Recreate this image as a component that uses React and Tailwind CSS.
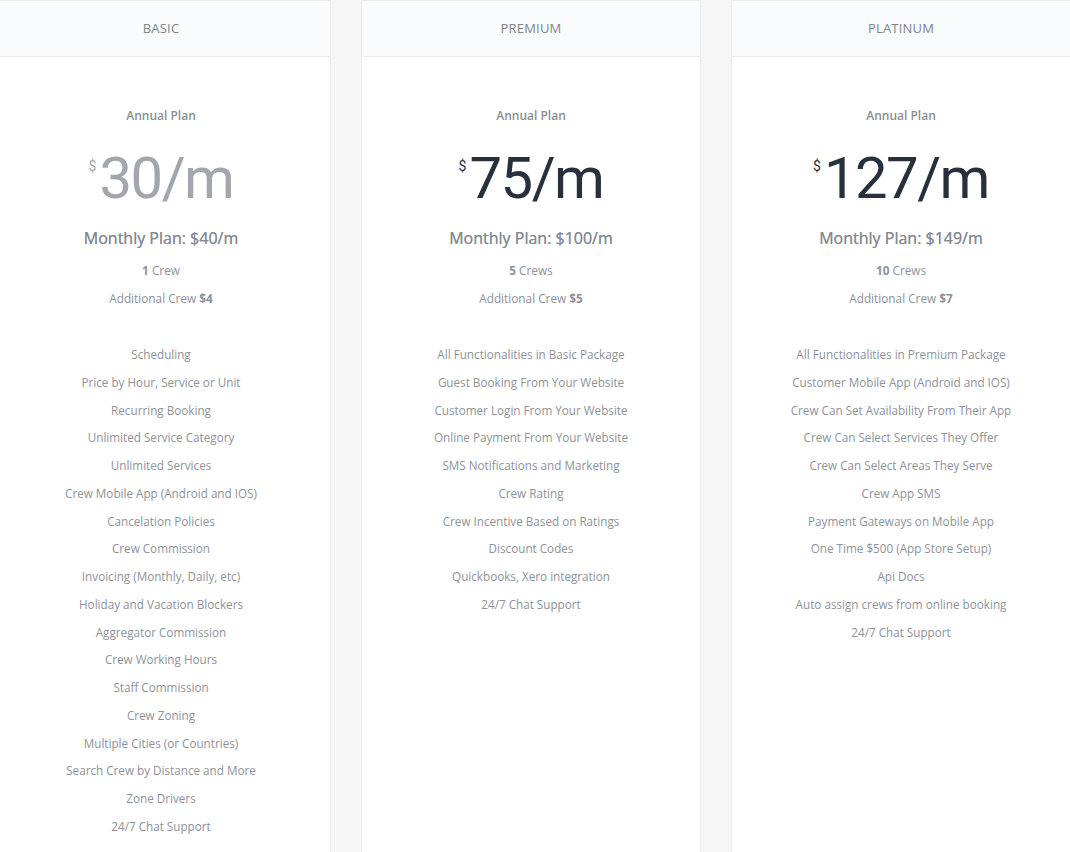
const plans = [
  {
    name: 'Basic',
    price: '30',
    muted: true,
    monthly: '$40/m',
    crews: '1',
    crewLabel: 'Crew',
    extra: '$4',
    features: [
      'Scheduling',
      'Price by Hour, Service or Unit',
      'Recurring Booking',
      'Unlimited Service Category',
      'Unlimited Services',
      'Crew Mobile App (Android and IOS)',
      'Cancelation Policies',
      'Crew Commission',
      'Invoicing (Monthly, Daily, etc)',
      'Holiday and Vacation Blockers',
      'Aggregator Commission',
      'Crew Working Hours',
      'Staff Commission',
      'Crew Zoning',
      'Multiple Cities (or Countries)',
      'Search Crew by Distance and More',
      'Zone Drivers',
      '24/7 Chat Support'
    ]
  },
  {
    name: 'Premium',
    price: '75',
    monthly: '$100/m',
    crews: '5',
    crewLabel: 'Crews',
    extra: '$5',
    features: [
      'All Functionalities in Basic Package',
      'Guest Booking From Your Website',
      'Customer Login From Your Website',
      'Online Payment From Your Website',
      'SMS Notifications and Marketing',
      'Crew Rating',
      'Crew Incentive Based on Ratings',
      'Discount Codes',
      'Quickbooks, Xero integration',
      '24/7 Chat Support'
    ]
  },
  {
    name: 'Platinum',
    price: '127',
    monthly: '$149/m',
    crews: '10',
    crewLabel: 'Crews',
    extra: '$7',
    features: [
      'All Functionalities in Premium Package',
      'Customer Mobile App (Android and IOS)',
      'Crew Can Set Availability From Their App',
      'Crew Can Select Services They Offer',
      'Crew Can Select Areas They Serve',
      'Crew App SMS',
      'Payment Gateways on Mobile App',
      'One Time $500 (App Store Setup)',
      'Api Docs',
      'Auto assign crews from online booking',
      '24/7 Chat Support'
    ]
  }
];

const PlanCard = ({ plan }) => (
  <div className="w-[340px] shrink-0 bg-white border-x border-t border-[#ededed] min-h-[860px]">
    <div className="h-[56px] flex items-center justify-center bg-[#fafbfd] border-b border-[#ececec]">
      <span className="text-[13px] font-medium uppercase text-[#80858c] tracking-[0.2px]">{plan.name}</span>
    </div>
    <div className="flex flex-col items-center pt-[49px] text-center">
      <p className="text-[12px] font-semibold text-[#8a8e95] leading-[20px]">Annual Plan</p>
      <div
        className={`mt-[21px] flex items-start font-['Roboto',sans-serif] ${
          plan.muted ? 'text-[#a3a6ad]' : 'text-[#28303d]'
        }`}
      >
        <span className="text-[14px] mt-[9px] mr-[3px]">$</span>
        <span className="text-[58px] leading-[62px] tracking-[-1.5px]">{plan.price}/m</span>
      </div>
      <p className="mt-[17px] text-[16px] text-[#858a91] leading-[24px] [text-shadow:0_0_0.3px_#858a91]">
        Monthly Plan: {plan.monthly}
      </p>
      <p className="mt-[10px] text-[11.8px] text-[#8e9299] leading-[20px]">
        <span className="font-bold">{plan.crews}</span> {plan.crewLabel}
      </p>
      <p className="mt-[8px] text-[11.8px] text-[#8e9299] leading-[20px]">
        Additional Crew <span className="font-bold">{plan.extra}</span>
      </p>
      <ul className="mt-[33px] text-[11.7px] text-[#8e9299]">
        {plan.features.map((f) => (
          <li key={f} className="leading-[27.75px]">{f}</li>
        ))}
      </ul>
    </div>
  </div>
);

export default function App() {
  return (
    <div className="h-[852px] overflow-hidden bg-[#f6f6f6] font-['Open_Sans',sans-serif]">
      <div className="flex gap-[30px] ml-[-9px]">
        {plans.map((p) => (
          <PlanCard key={p.name} plan={p} />
        ))}
      </div>
    </div>
  );
}
